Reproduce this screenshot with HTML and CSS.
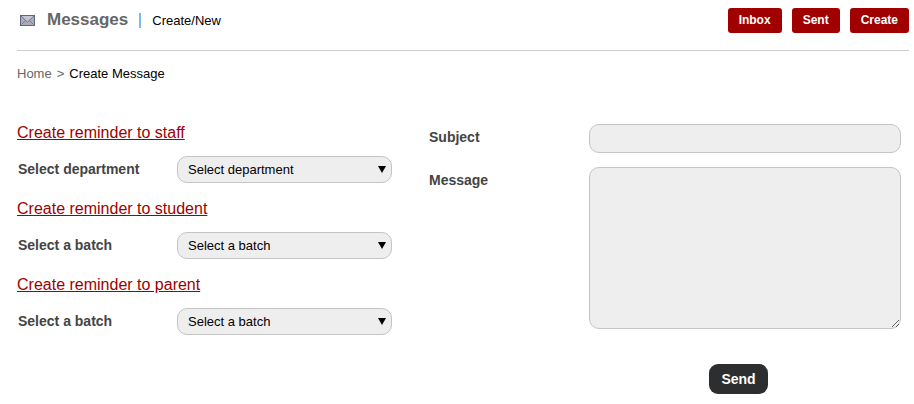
FILE: index.html
```html
<!DOCTYPE html>
<html lang="en">

<head>
    <meta charset="UTF-8">
    <meta name="viewport" content="width=device-width, initial-scale=1.0">
    <title>Create Message</title>
    <link rel="stylesheet" href="styles.css">
</head>

<body>

    <div class="header">
        <svg class="mail-icon" width="15" height="11" viewBox="0 0 15 11" aria-hidden="true">
            <rect x="0.5" y="0.5" width="14" height="10" fill="#a9adbb" stroke="#5f677e" />
            <path d="M1 1 L7.5 7 L14 1" fill="#c3c6d0" stroke="#6f778c" />
            <path d="M1.5 9.5 L5.5 5.5 M13.5 9.5 L9.5 5.5" fill="none" stroke="#7b8297" />
        </svg>
        <h1>Messages</h1>
        <span class="divider"></span>
        <span class="sub-title">Create/New</span>
        <div class="actions">
            <button type="button">Inbox</button>
            <button type="button">Sent</button>
            <button type="button">Create</button>
        </div>
    </div>

    <div class="breadcrumb">
        <a href="#">Home</a>
        <span class="arrow">&gt;</span>
        <span class="current">Create Message</span>
    </div>

    <form class="message-form">
        <div class="recipients">
            <a class="reminder-link" href="#">Create reminder to staff</a>
            <div class="select-row">
                <label for="department">Select department</label>
                <div class="select-box">
                    <select id="department">
                        <option>Select department</option>
                    </select>
                </div>
            </div>

            <a class="reminder-link" href="#">Create reminder to student</a>
            <div class="select-row">
                <label for="studentBatch">Select a batch</label>
                <div class="select-box">
                    <select id="studentBatch">
                        <option>Select a batch</option>
                    </select>
                </div>
            </div>

            <a class="reminder-link" href="#">Create reminder to parent</a>
            <div class="select-row">
                <label for="parentBatch">Select a batch</label>
                <div class="select-box">
                    <select id="parentBatch">
                        <option>Select a batch</option>
                    </select>
                </div>
            </div>
        </div>

        <div class="content">
            <label for="subject">Subject</label>
            <input type="text" id="subject">
            <label for="message">Message</label>
            <textarea id="message"></textarea>
            <div class="submit-row">
                <button type="submit" class="send">Send</button>
            </div>
        </div>
    </form>

</body>

</html>
```

FILE: styles.css
```css
* {
    box-sizing: border-box;
}

body {
    font-family: Arial, "Liberation Sans", sans-serif;
    font-size: 13px;
    margin: 0;
    padding: 0 5px 0 17px;
    background-color: #fff;
    color: #000;
}

.header {
    display: flex;
    align-items: center;
    height: 51px;
    padding: 0 0 10px 3px;
    border-bottom: 1px solid #ccc;
}

.mail-icon {
    margin-right: 12px;
}

h1 {
    margin: 0;
    font-size: 17px;
    color: #666;
}

.divider {
    height: 15px;
    margin: 0 11px;
    border-left: 1px solid #c9a58c;
    border-right: 1px solid #7fb9e6;
}

.actions {
    display: flex;
    gap: 10px;
    margin-left: auto;
}

.actions button {
    height: 25px;
    padding: 0 11px;
    border: none;
    border-radius: 3px;
    background-color: #a00000;
    color: #fff;
    font-family: inherit;
    font-size: 12px;
    font-weight: bold;
    cursor: pointer;
}

.breadcrumb {
    display: flex;
    gap: 5px;
    padding-top: 15px;
    line-height: 16px;
}

.breadcrumb a,
.breadcrumb .arrow {
    color: #666;
    text-decoration: none;
}

.message-form {
    display: flex;
    gap: 37px;
    padding: 42px 8px 0 0;
}

.recipients {
    flex: 0 0 375px;
}

.reminder-link {
    display: block;
    line-height: 18px;
    font-size: 16px;
    color: #a00000;
}

label {
    color: #444;
    font-size: 14px;
    font-weight: bold;
}

.select-row {
    display: flex;
    align-items: center;
    margin: 14px 0 17px;
}

.select-row label {
    width: 160px;
    padding: 0 0 2px 1px;
}

.select-box {
    position: relative;
    flex: 1;
}

/* dropdown arrow */
.select-box::after {
    content: "";
    position: absolute;
    top: 10px;
    right: 6px;
    border: 4px solid transparent;
    border-top: 7px solid #000;
    border-bottom: none;
    pointer-events: none;
}

select,
input,
textarea {
    display: block;
    width: 100%;
    margin: 0;
    border: 1px solid #c4c4c4;
    border-radius: 10px;
    background-color: #eee;
    color: #000;
    font-family: inherit;
    font-size: 13px;
}

select {
    appearance: none;
    height: 27px;
    padding: 0 20px 0 10px;
}

.content {
    flex: 1;
    display: grid;
    grid-template-columns: 160px 1fr;
    row-gap: 14px;
    align-items: start;
}

.content label {
    padding-top: 5px;
}

input {
    height: 29px;
    padding: 0 10px;
}

textarea {
    height: 162px;
    padding: 8px 10px;
    resize: both;
}

.submit-row {
    grid-column: 2;
    padding: 21px 13px 0 0;
    text-align: center;
}

.send {
    height: 30px;
    padding: 0 12px;
    border: none;
    border-radius: 9px;
    background-color: #2d2e30;
    color: #fff;
    font-family: inherit;
    font-size: 14px;
    font-weight: bold;
    cursor: pointer;
}
```
